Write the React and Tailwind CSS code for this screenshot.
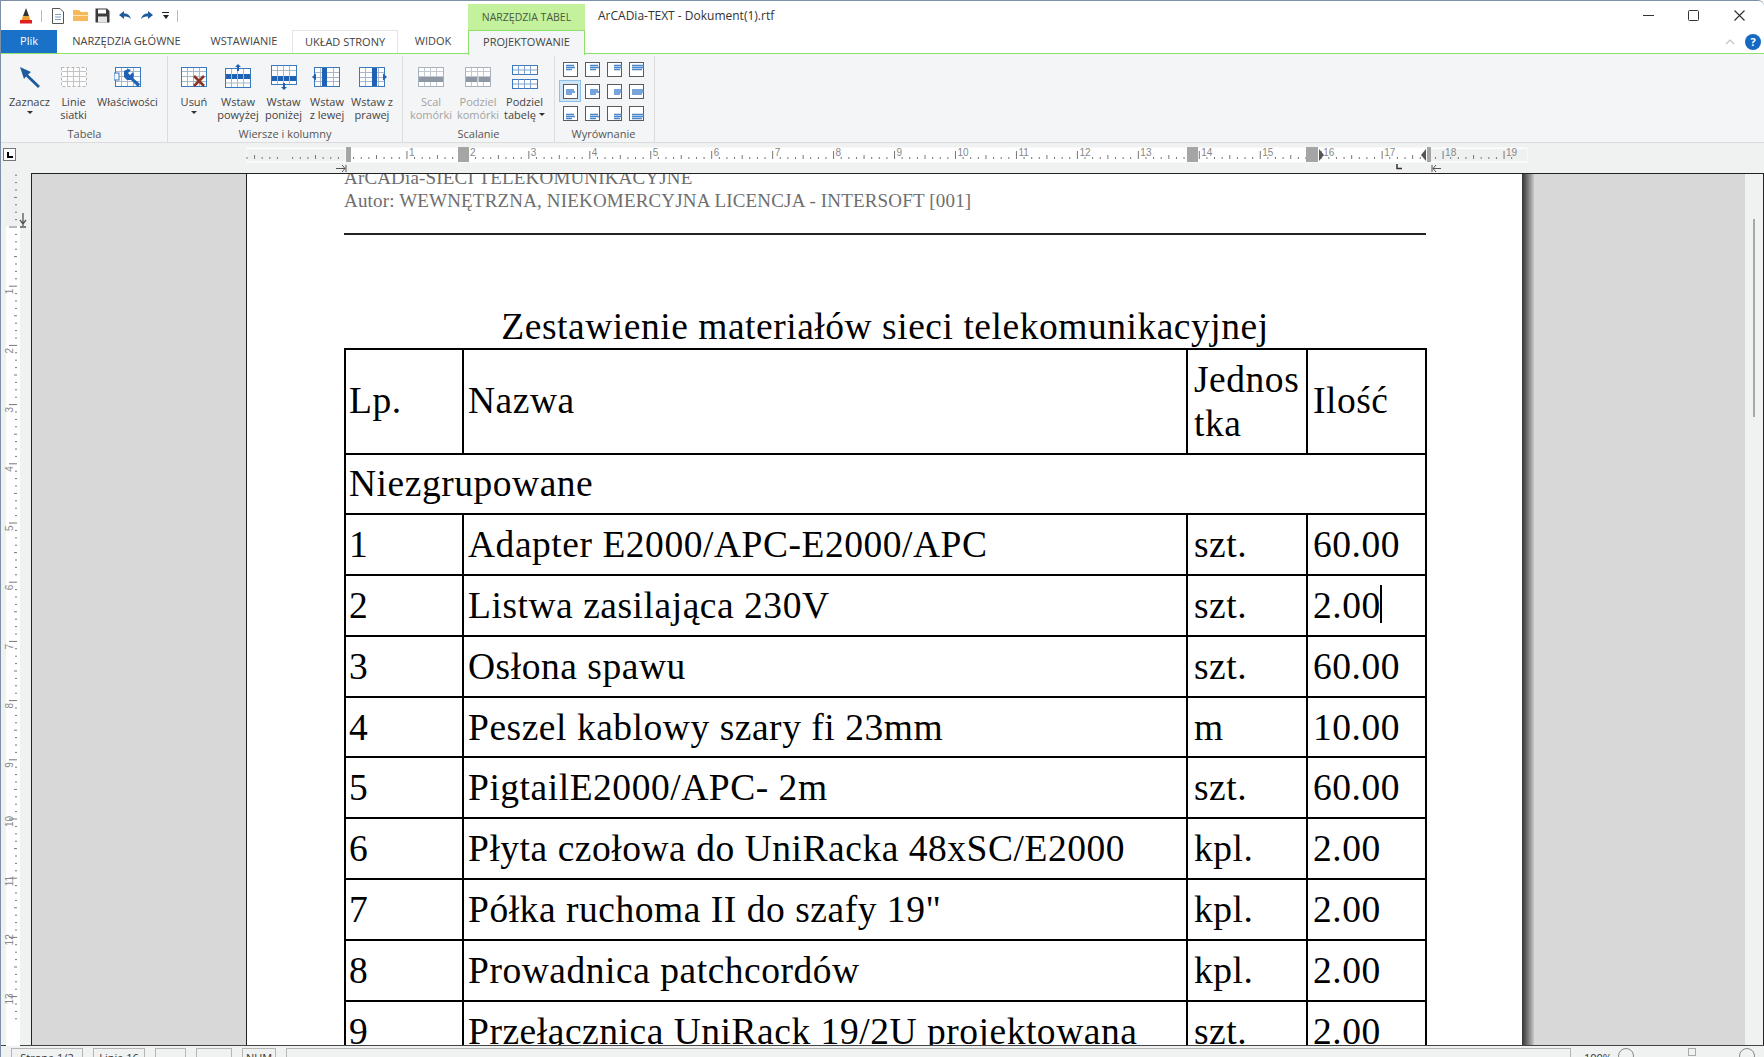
import React from 'react';

const UI = { fontFamily: '"Open Sans", "Noto Sans", sans-serif' };

const ROWS = [
  ['1', 'Adapter E2000/APC-E2000/APC', 'szt.', '60.00'],
  ['2', 'Listwa zasilająca 230V', 'szt.', '2.00'],
  ['3', 'Osłona spawu', 'szt.', '60.00'],
  ['4', 'Peszel kablowy szary fi 23mm', 'm', '10.00'],
  ['5', 'PigtailE2000/APC- 2m', 'szt.', '60.00'],
  ['6', 'Płyta czołowa do UniRacka 48xSC/E2000', 'kpl.', '2.00'],
  ['7', 'Półka ruchoma II do szafy 19"', 'kpl.', '2.00'],
  ['8', 'Prowadnica patchcordów', 'kpl.', '2.00'],
  ['9', 'Przełącznica UniRack 19/2U projektowana', 'szt.', '2.00'],
];

function Grid({ color = '#3a78c0', line = '#a9b8c8', children, dashed }) {
  return (
    <svg width="28" height="24" viewBox="0 0 28 24">
      <rect x="1.5" y="2.5" width="25" height="19" fill="#fdfdfd" stroke={color} strokeDasharray={dashed ? '3 2' : undefined} />
      {[6.5, 11.5, 16.5].map(y => <line key={y} x1="2" x2="26" y1={y} y2={y} stroke={line} />)}
      {[7.5, 13.5, 19.5].map(x => <line key={x} x1={x} x2={x} y1="3" y2="21" stroke={line} />)}
      {children}
    </svg>
  );
}

const BLUE = '#1f62b4';

function ArrowIcon() {
  return (
    <svg width="28" height="24" viewBox="0 0 28 24">
      <path d="M4 2 L15 7 L12 9.5 L24 21 L22 23 L10 11.5 L8 14 Z" fill="#1f5c9c" />
    </svg>
  );
}

function WrenchIcon() {
  return (
    <Grid>
      <rect x="0" y="8" width="5" height="7" fill="#f4f5f6" stroke="#3a78c0" />
      <path d="M10 6 L14 4 L17 5 L14 8 L16 10 L19 7 L20 10 L19 13 L26 19 L24 22 L17 15 L13 15 L10 12 Z" fill="#1f62b4" />
    </Grid>
  );
}

function DeleteIcon() {
  return (
    <Grid>
      <path d="M14 11 L24 21 M24 11 L14 21" stroke="#8a3524" strokeWidth="2.6" />
    </Grid>
  );
}

function AboveIcon() {
  return (
    <svg width="28" height="26" viewBox="0 0 28 26">
      <rect x="1.5" y="4.5" width="25" height="19" fill="#fdfdfd" stroke="#3a78c0" />
      <rect x="2" y="10" width="24" height="5" fill={BLUE} />
      <line x1="2" x2="26" y1="19" y2="19" stroke="#a9b8c8" />
      {[7.5, 13.5, 19.5].map(x => <line key={x} x1={x} x2={x} y1="5" y2="23" stroke="#a9b8c8" />)}
      <path d="M14 0 L17 3 L15 3 L15 7 L13 7 L13 3 L11 3 Z" fill={BLUE} />
    </svg>
  );
}

function BelowIcon() {
  return (
    <svg width="28" height="26" viewBox="0 0 28 26">
      <rect x="1.5" y="1.5" width="25" height="19" fill="#fdfdfd" stroke="#3a78c0" />
      <rect x="2" y="12" width="24" height="5" fill={BLUE} />
      <line x1="2" x2="26" y1="6.5" y2="6.5" stroke="#a9b8c8" />
      {[7.5, 13.5, 19.5].map(x => <line key={x} x1={x} x2={x} y1="2" y2="20" stroke="#a9b8c8" />)}
      <path d="M14 26 L17 23 L15 23 L15 19 L13 19 L13 23 L11 23 Z" fill={BLUE} />
    </svg>
  );
}

function SideIcon({ right }) {
  const barX = right ? 15 : 10;
  return (
    <svg width="30" height="24" viewBox="0 0 30 24">
      <rect x="2.5" y="2.5" width="25" height="19" fill="#fdfdfd" stroke="#3a78c0" />
      {[7.5, 12.5, 16.5].map(y => <line key={y} x1="3" x2="27" y1={y} y2={y} stroke="#a9b8c8" />)}
      {[8.5, 21.5].map(x => <line key={x} x1={x} x2={x} y1="3" y2="21" stroke="#a9b8c8" />)}
      <rect x={barX} y="3" width="5" height="18" fill={BLUE} />
      {right
        ? <path d="M30 12 L26 8.5 L26 15.5 Z" fill={BLUE} />
        : <path d="M0 12 L4 8.5 L4 15.5 Z" fill={BLUE} />}
    </svg>
  );
}

function MergeIcon({ split }) {
  return (
    <Grid color="#aab3bd" line="#c2c9d0">
      <rect x="2" y="12" width="24" height="5" fill="#8d98a4" />
      {split && <line x1="14" x2="14" y1="12" y2="17" stroke="#fff" />}
    </Grid>
  );
}

function SplitTableIcon() {
  return (
    <svg width="28" height="26" viewBox="0 0 28 26">
      {[1.5, 15.5].map(y => (
        <g key={y}>
          <rect x="1.5" y={y} width="25" height="9" fill="#fdfdfd" stroke="#3a78c0" />
          <line x1="2" x2="26" y1={y + 4.5} y2={y + 4.5} stroke="#7fa3cc" />
          {[7.5, 13.5, 19.5].map(x => <line key={x} x1={x} x2={x} y1={y} y2={y + 9} stroke="#7fa3cc" />)}
        </g>
      ))}
    </svg>
  );
}

function RibbonButton({ icon, lines, muted, caret, dropLast, className }) {
  return (
    <div className={`flex flex-col items-center ${className}`}>
      <div className="flex h-[30px] items-center justify-center">{icon}</div>
      <div className={`mt-[3px] text-center text-[11px] leading-[13px] whitespace-nowrap ${muted ? 'text-[#a3a3a3]' : 'text-[#444444]'}`}>
        {lines.map((l, i) => (
          <div key={i} className="flex items-center justify-center">
            {l}
            {dropLast && i === lines.length - 1 && <span className="ml-[3px] h-0 w-0 border-x-[3px] border-t-[3px] border-x-transparent border-t-[#333333]" />}
          </div>
        ))}
      </div>
      {caret && <div className="mt-[3px] h-0 w-0 border-x-[3px] border-t-[3px] border-x-transparent border-t-[#333333]" />}
    </div>
  );
}

function RibbonGroup({ label, className, labelClass = '', children }) {
  return (
    <div className={`flex h-[86px] shrink-0 flex-col border-r border-[#dddddd] ${className}`}>
      <div className="flex flex-1 pt-[6px]">{children}</div>
      <div className={`pb-[1px] text-center text-[11px] leading-[14px] text-[#555555] ${labelClass}`}>{label}</div>
    </div>
  );
}

function AlignIcon({ row, col, active }) {
  const w = [7, 7, 7, 11];
  const x = [3, 5, 7, 3][col];
  const y = [3, 5.5, 8][row];
  return (
    <div className={`flex h-[22px] w-[22px] items-center justify-center ${active ? 'border border-[#8cc0e8] bg-[#cfe6f7]' : ''}`}>
      <svg width="15" height="15" viewBox="0 0 15 15">
        <rect x="0.5" y="0.5" width="14" height="14" fill="#fff" stroke="#5a5a5a" />
        {[0, 2, 4].map(d => (
          <line key={d} x1={x} x2={x + (d === 2 && col !== 3 ? w[col] + 2 : w[col] + 1) - (d === 4 ? 2 : 0)} y1={y + d + 0.5} y2={y + d + 0.5} stroke="#4a86cc" strokeWidth="1.4" />
        ))}
      </svg>
    </div>
  );
}

function HorizontalRuler() {
  const step = 60.95;
  const origin = 346;
  const ticks = [];
  for (let i = -13; i < 154; i++) {
    const x = origin + i * step / 8;
    if (i % 8 === 0) continue;
    ticks.push(<line key={i} x1={x} x2={x} y1={i % 4 === 0 ? 155 : 157} y2="159" stroke="#777777" />);
  }
  const labels = [];
  for (let n = 1; n <= 19; n++) {
    const x = origin + n * step;
    labels.push(
      <g key={n}>
        <line x1={x} x2={x} y1="151" y2="159" stroke="#777777" />
        <text x={x + 2} y="156" fontSize="10" fill="#888888" fontFamily="Liberation Sans, sans-serif">{n}</text>
      </g>
    );
  }
  return (
    <svg width="1764" height="30" viewBox="0 143 1764 30" className="-ml-[1px] block">
      <rect x="247" y="148" width="1280" height="14" fill="#fafafa" stroke="#ffffff" />
      <rect x="247" y="149" width="98" height="12" fill="#eff0f0" />
      <rect x="1430" y="149" width="97" height="12" fill="#eff0f0" />
      <rect x="349" y="148" width="1077" height="14" fill="#ffffff" />
      {ticks}
      {labels}
      <rect x="346" y="147" width="5" height="15" fill="#a5a5a5" />
      <rect x="458" y="147" width="11" height="15" fill="#a5a5a5" />
      <rect x="1187" y="147" width="11" height="15" fill="#a5a5a5" />
      <rect x="1306" y="147" width="12" height="15" fill="#a5a5a5" />
      <path d="M1319 149 L1324 155 L1319 161 Z" fill="#555555" />
      <path d="M1421 155 L1426 149 L1426 161 Z" fill="#555555" />
      <rect x="1427" y="147" width="4" height="15" fill="#a5a5a5" />
      <path d="M336 168.5 H345 M342 165 L345 168.5 L342 172 M346 165 V172" stroke="#555555" fill="none" />
      <path d="M1433 168.5 H1441 M1436 165 L1433 168.5 L1436 172 M1432 165 V172" stroke="#555555" fill="none" />
      <path d="M1397 164 V168.5 H1402" stroke="#333333" strokeWidth="1.5" fill="none" />
    </svg>
  );
}

function VerticalRuler() {
  const step = 59.2;
  const origin = 227;
  const ticks = [];
  for (let i = -7; i < 108; i++) {
    const y = origin - 173 + i * step / 8;
    if (i % 8 === 0) continue;
    ticks.push(<line key={i} x1={i % 4 === 0 ? 14 : 15} x2="17" y1={y} y2={y} stroke="#777777" />);
  }
  return (
    <svg width="30" height="873" viewBox="1 0 30 873" className="block shrink-0">
      <rect x="6" y="0" width="14" height="53" fill="#eff0f0" />
      <rect x="6" y="53" width="14" height="820" fill="#ffffff" />
      {ticks}
      <line x1="9" x2="17" y1="54" y2="54" stroke="#777777" />
      {Array.from({ length: 13 }, (_, k) => {
        const y = origin - 173 + (k + 1) * step;
        return (
          <g key={k}>
            <line x1="9" x2="17" y1={y} y2={y} stroke="#777777" />
            <text transform={`translate(13 ${y + 8}) rotate(-90)`} fontSize="10" fill="#888888" fontFamily="Liberation Sans, sans-serif">{k + 1}</text>
          </g>
        );
      })}
      <path d="M23 40 V53 M20 47 L23 51 L26 47 M20 54 H26" stroke="#555555" fill="none" strokeWidth="1.3" />
    </svg>
  );
}

function SideGray({ className }) {
  return <div className={`bg-[#d8d8d8] ${className}`} />;
}

export default function App() {
  return (
    <div className="flex h-[1057px] w-[1764px] flex-col overflow-hidden rounded-tr-[6px] border-t border-l border-[#7d90a5] bg-white text-[#444444]" style={UI}>
      {/* Title bar */}
      <div className="flex h-[29px] shrink-0 items-end">
        <div className="flex h-[29px] w-[467px] items-center">
          <svg width="14" height="16" viewBox="0 0 14 16" className="ml-[18px]">
            <path d="M7 0 L10 8 L4 8 Z" fill="#333333" />
            <path d="M4 8 L10 8 L11.5 12 L2.5 12 Z" fill="#f0a030" />
            <path d="M1 12 H13 V15.5 H1 Z" fill="#e02020" />
          </svg>
          <div className="ml-[8px] h-[12px] w-[1px] bg-[#bbbbbb]" />
          <svg width="14" height="16" viewBox="0 0 14 16" className="ml-[9px]">
            <path d="M1.5 0.5 H9 L12.5 4 V15.5 H1.5 Z" fill="#fff" stroke="#555555" />
            <path d="M4 6.5 H10 M4 9 H10 M4 11.5 H10" stroke="#7f9fc4" />
          </svg>
          <svg width="16" height="13" viewBox="0 0 16 13" className="ml-[8px]">
            <path d="M0 1 H6 L8 3 H15 V12 H0 Z" fill="#f5b95a" />
            <path d="M0 6 H16 V7 H0 Z" fill="#fde6b8" />
          </svg>
          <svg width="15" height="15" viewBox="0 0 15 15" className="ml-[6px]">
            <path d="M0.5 0.5 H12 L14.5 3 V14.5 H0.5 Z" fill="#3c3c3c" />
            <rect x="3" y="1.5" width="8" height="4" fill="#fff" />
            <rect x="3" y="8.5" width="9" height="6" fill="#e5e5e5" />
          </svg>
          <svg width="12" height="9" viewBox="0 0 12 9" className="ml-[9px]">
            <path d="M0 4 L5 0 V2.5 C9 2.5 11 4.5 12 8 C10 6 8 5.5 5 5.5 V8 Z" fill="#1f5c9c" />
          </svg>
          <svg width="12" height="9" viewBox="0 0 12 9" className="ml-[10px]">
            <path d="M12 4 L7 0 V2.5 C3 2.5 1 4.5 0 8 C2 6 4 5.5 7 5.5 V8 Z" fill="#1f5c9c" />
          </svg>
          <div className="ml-[9px] flex flex-col items-center gap-[2px]">
            <div className="h-[1px] w-[7px] bg-[#222222]" />
            <div className="h-0 w-0 border-x-[3.5px] border-t-[4px] border-x-transparent border-t-[#222222]" />
          </div>
          <div className="ml-[8px] h-[12px] w-[1px] bg-[#bbbbbb]" />
        </div>
        <div className="flex h-[26px] w-[117px] items-center justify-center bg-[#c4f19c] pt-[2px] text-[10.5px] font-medium text-[#4a5a40]">NARZĘDZIA TABEL</div>
        <div className="ml-[13px] h-[29px] flex-1 pt-[7px] text-[12px] leading-[16px] text-[#333333]">ArCADia-TEXT - Dokument(1).rtf</div>
        <div className="flex h-[29px] items-center pr-[19px]">
          <div className="h-[1.5px] w-[11px] bg-[#333333]" />
          <div className="ml-[34px] h-[11px] w-[11px] rounded-[1.5px] border-[1.5px] border-[#333333]" />
          <svg width="11" height="11" viewBox="0 0 11 11" className="ml-[35px]">
            <path d="M0.5 0.5 L10.5 10.5 M10.5 0.5 L0.5 10.5" stroke="#333333" strokeWidth="1.2" />
          </svg>
        </div>
      </div>

      {/* Tabs */}
      <div className="relative flex h-[24px] shrink-0 items-stretch border-b-[1.5px] border-[#8fe06a] text-[11px] leading-[21px]">
        <div className="w-[56px] bg-[#1a72c8] text-center font-medium text-white">Plik</div>
        <div className="w-[139px] text-center font-medium">NARZĘDZIA GŁÓWNE</div>
        <div className="w-[96px] text-center font-medium">WSTAWIANIE</div>
        <div className="w-[106px] border-x border-t border-[#e4e4e4] text-center font-medium">UKŁAD STRONY</div>
        <div className="w-[70px] text-center font-medium">WIDOK</div>
        <div className="-mb-[1.5px] w-[117px] border-x-[1.5px] border-t-[1.5px] border-[#8fe06a] bg-[#f4f5f6] text-center font-medium">PROJEKTOWANIE</div>
        <div className="ml-auto flex items-center pr-[3px]">
          <svg width="10" height="6" viewBox="0 0 10 6">
            <path d="M1 5 L5 1 L9 5" stroke="#c2c2c2" fill="none" strokeWidth="1.2" />
          </svg>
          <div className="ml-[10px] flex h-[16px] w-[16px] items-center justify-center rounded-full bg-[#1568c4] text-[11px] leading-none font-bold text-white">?</div>
        </div>
      </div>

      {/* Ribbon */}
      <div className="flex h-[89px] shrink-0 items-start border-b border-[#dcdcdc] bg-[#f4f5f6] pt-[2px]">
        <RibbonGroup label="Tabela" className="w-[167px] pl-[1px]">
          <RibbonButton icon={<ArrowIcon />} lines={['Zaznacz']} caret className="w-[55px]" />
          <RibbonButton icon={<Grid color="#b5b5b5" line="#c4c4c4" dashed />} lines={['Linie', 'siatki']} className="w-[33px]" />
          <RibbonButton icon={<WrenchIcon />} lines={['Właściwości']} className="w-[75px]" />
        </RibbonGroup>
        <RibbonGroup label="Wiersze i kolumny" labelClass="pr-[4px]" className="w-[235px] pl-[4px]">
          <RibbonButton icon={<DeleteIcon />} lines={['Usuń']} caret className="w-[44px]" />
          <RibbonButton icon={<AboveIcon />} lines={['Wstaw', 'powyżej']} className="w-[44px]" />
          <RibbonButton icon={<BelowIcon />} lines={['Wstaw', 'poniżej']} className="w-[47px]" />
          <RibbonButton icon={<SideIcon />} lines={['Wstaw', 'z lewej']} className="w-[40px]" />
          <RibbonButton icon={<SideIcon right />} lines={['Wstaw z', 'prawej']} className="w-[50px]" />
        </RibbonGroup>
        <RibbonGroup label="Scalanie" labelClass="pr-[3px]" className="w-[152px] pl-[3px]">
          <RibbonButton icon={<MergeIcon />} lines={['Scal', 'komórki']} muted className="w-[50px]" />
          <RibbonButton icon={<MergeIcon split />} lines={['Podziel', 'komórki']} muted className="w-[44px]" />
          <RibbonButton icon={<SplitTableIcon />} lines={['Podziel', 'tabelę']} dropLast className="w-[49px]" />
        </RibbonGroup>
        <RibbonGroup label="Wyrównanie" labelClass="pr-[6px]" className="w-[100px] pl-[4px]">
          <div className="-mt-[4px] grid h-[66px] grid-cols-4 content-start">
            {[0, 1, 2].map(r => [0, 1, 2, 3].map(c => (
              <AlignIcon key={`${r}-${c}`} row={r} col={c} active={r === 1 && c === 0} />
            )))}
          </div>
        </RibbonGroup>
      </div>

      {/* Ruler */}
      <div className="relative h-[30px] shrink-0 bg-[#f0f1f1]">
        <HorizontalRuler />
        <div className="absolute top-[5px] left-[2px] flex h-[13px] w-[13px] items-center justify-center border border-[#777777] bg-white">
          <div className="h-[6px] w-[6px] border-b-2 border-l-2 border-black" />
        </div>
      </div>

      {/* Document */}
      <div className="flex h-[873px] shrink-0 border-b border-[#444444] bg-[#f0f1f1]">
        <VerticalRuler />
        <div className="flex h-full flex-1 overflow-hidden border-t border-r border-l border-[#222222]">
          <SideGray className="h-full w-[215px] shrink-0 border-r border-[#222222]" />
          <div className="h-full w-[1275px] shrink-0 overflow-hidden bg-white pl-[97px]" style={{ fontFamily: '"Liberation Serif", serif' }}>
            <div className="-mt-[8px] w-[1082px]">
              <div className="text-[19px] leading-[23px] tracking-[0.17px] text-[#6e6e6e]">ArCADia-SIECI TELEKOMUNIKACYJNE</div>
              <div className="text-[19px] leading-[23px] tracking-[0.17px] text-[#6e6e6e]">Autor: WEWNĘTRZNA, NIEKOMERCYJNA LICENCJA - INTERSOFT [001]</div>
              <div className="mt-[21px] h-[1.5px] bg-[#222222]" />
              <div className="mt-[70px] text-center text-[37.5px] leading-[43px] tracking-[0.53px] text-black">Zestawienie materiałów sieci telekomunikacyjnej</div>
              <table className="w-[1081px] table-fixed border-collapse text-[37.5px] tracking-[0.53px] text-black">
                <colgroup>
                  <col className="w-[118px]" />
                  <col className="w-[724px]" />
                  <col className="w-[120px]" />
                  <col className="w-[119px]" />
                </colgroup>
                <tbody>
                  <tr className="h-[105px] leading-[44px]">
                    <td className="border-2 border-black pl-[3px]">Lp.</td>
                    <td className="border-2 border-black pl-[4px]">Nazwa</td>
                    <td className="border-2 border-black pl-[6px] pt-[1px]">Jednos<br />tka</td>
                    <td className="border-2 border-black pl-[5px]">Ilość</td>
                  </tr>
                  <tr className="h-[60.8px] leading-[44px]">
                    <td colSpan={4} className="border-2 border-black pt-[1px] pl-[3px]">Niezgrupowane</td>
                  </tr>
                  {ROWS.map(r => (
                    <tr key={r[0]} className="h-[60.8px] leading-[44px]">
                      <td className="border-2 border-black pt-[1px] pl-[3px]">{r[0]}</td>
                      <td className="border-2 border-black pt-[1px] pl-[4px] whitespace-nowrap">{r[1]}</td>
                      <td className="border-2 border-black pt-[1px] pl-[6px]">{r[2]}</td>
                      <td className="relative border-2 border-black pt-[1px] pl-[5px]">
                        {r[3]}
                        {r[0] === '2' && <span className="absolute top-[9px] left-[72px] h-[38px] w-[1.5px] bg-black" />}
                      </td>
                    </tr>
                  ))}
                </tbody>
              </table>
            </div>
          </div>
          <div className="h-full w-[12px] shrink-0 bg-gradient-to-r from-[#333333] to-[#c9c9c9]" />
          <SideGray className="h-full flex-1" />
          <div className="relative h-full w-[18px] shrink-0 bg-[#f0f1f1]">
            <div className="absolute top-[45px] left-[8px] h-[198px] w-[2px] bg-[#a8a8a8]" />
          </div>
        </div>
      </div>

      {/* Status bar */}
      <div className="flex h-[11px] shrink-0 items-start bg-[#f0f1f1] pt-[2px] pl-[10px] text-[11px] leading-[13px] text-[#333333]">
        <div className="h-[16px] w-[72px] shrink-0 border border-[#b5b5b5] pt-[2px] text-center">Strona 1/2</div>
        <div className="ml-[10px] h-[16px] w-[52px] shrink-0 border border-[#b5b5b5] pt-[2px] text-center">Linia 16</div>
        <div className="ml-[10px] h-[16px] w-[31px] shrink-0 border border-[#b5b5b5]" />
        <div className="ml-[10px] h-[16px] w-[36px] shrink-0 border border-[#b5b5b5]" />
        <div className="ml-[10px] h-[16px] w-[34px] shrink-0 border border-[#b5b5b5] pt-[2px] text-center">NUM</div>
        <div className="ml-[10px] h-[16px] w-[1285px] shrink-0 border border-[#b5b5b5]" />
        <div className="ml-[13px] w-[34px] shrink-0 pt-[3px]">100%</div>
        <div className="h-[16px] w-[16px] shrink-0 rounded-full border border-[#888888]" />
        <div className="ml-[54px] h-[8px] w-[8px] shrink-0 border border-[#aaaaaa]" />
        <div className="ml-[43px] h-[16px] w-[16px] shrink-0 rounded-full border border-[#888888]" />
      </div>
    </div>
  );
}
